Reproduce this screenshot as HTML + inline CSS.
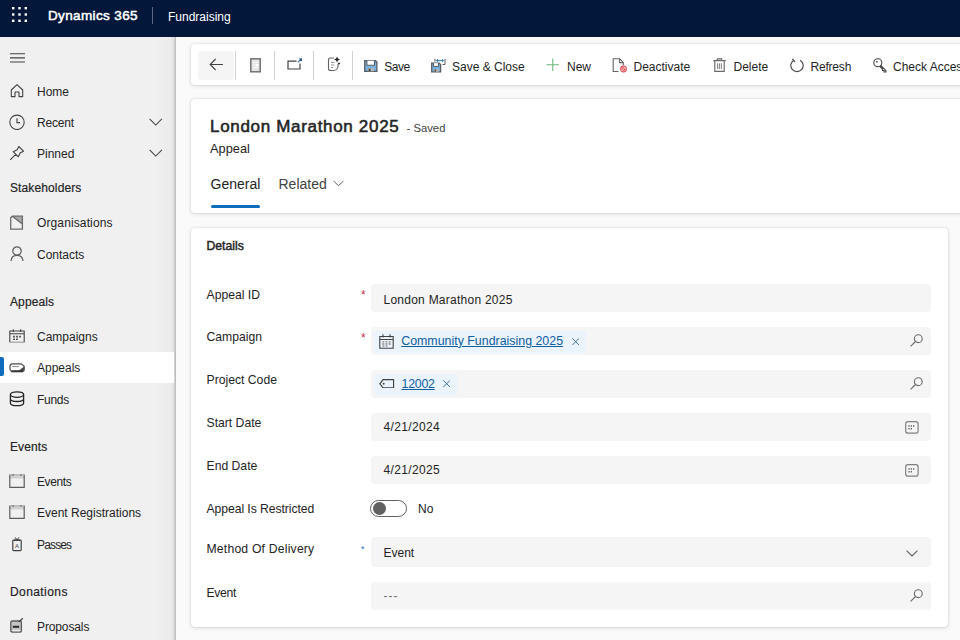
<!DOCTYPE html>
<html><head><meta charset="utf-8"><title>Appeal: London Marathon 2025</title>
<style>
*{box-sizing:border-box;margin:0;padding:0}
html,body{width:960px;height:640px;overflow:hidden;background:#fafafa;font-family:"Liberation Sans",sans-serif;font-size:12px;color:#242424}
.abs{position:absolute}
#top{position:absolute;left:0;top:0;width:960px;height:37px;background:#03173a;color:#fff}
#top .brand{position:absolute;left:48px;top:7px;font-size:13.500px;font-weight:400;-webkit-text-stroke:.5px #fff;line-height:18px;white-space:nowrap;letter-spacing:.37px}
#top .sep{position:absolute;left:152px;top:7px;width:1px;height:17px;background:#5a6886}
#top .app{position:absolute;left:168px;top:9px;font-size:12px;line-height:16px;white-space:nowrap}
#side{position:absolute;left:0;top:37px;width:175.600px;height:603px;background:linear-gradient(90deg,#f0f0f0 0,#f0f0f0 155px,#ebebeb 171px,#dcdcdc 174px,#bdbdbd 175.600px);}
.nav{position:absolute;left:0;width:175px;height:31px}
.nav .t{position:absolute;left:37px;top:9.250px;line-height:15px;white-space:nowrap;color:#242424}
.nav svg{position:absolute;left:9px;top:7px;width:16px;height:16px}
.nav.sel{background:#fff;width:174px}
.nav.sel:before{content:"";position:absolute;left:0;top:5.300px;width:3.900px;height:19.200px;background:#0f6cbd;border-radius:0 2px 2px 0}
.grp{position:absolute;left:10px;line-height:15px;white-space:nowrap;color:#242424;-webkit-text-stroke:.18px #242424;letter-spacing:.12px}
.card{position:absolute;background:#fff;border-radius:4px;box-shadow:0 0 2px rgba(0,0,0,.14),0 1px 4px rgba(0,0,0,.13)}
.cmd{position:absolute;top:0;height:46.500px;line-height:46.500px;white-space:nowrap;color:#242424}
.vsep{position:absolute;top:7px;width:1px;height:29px;background:#d1d1d1}
.lbl{position:absolute;left:16px;margin-top:.6px;font-size:12.200px;line-height:15px;white-space:nowrap;color:#242424}
.fld{position:absolute;left:180px;width:560px;height:28px;background:#f5f5f5;border-radius:4px}
.fld .v{position:absolute;left:13px;top:7px;line-height:15px;white-space:nowrap;color:#242424}
.req{position:absolute;left:170.600px;margin-top:.5px;color:#c4314b;font-size:12px;line-height:12px}
.lnk{color:#115ea3!important;text-decoration:underline;font-size:12.400px}
.sb{font-weight:400;-webkit-text-stroke:.45px #242424}
</style></head><body>
<div id="top">
<svg class="abs" style="left:11.600px;top:7.200px" width="16" height="16" viewBox="0 0 16 16" fill="#fff"><rect x="0" y="0" width="2.400" height="2.400"/><rect x="6.3" y="0" width="2.400" height="2.400"/><rect x="12.6" y="0" width="2.400" height="2.400"/><rect x="0" y="6.3" width="2.400" height="2.400"/><rect x="6.3" y="6.3" width="2.400" height="2.400"/><rect x="12.6" y="6.3" width="2.400" height="2.400"/><rect x="0" y="12.6" width="2.400" height="2.400"/><rect x="6.3" y="12.6" width="2.400" height="2.400"/><rect x="12.6" y="12.6" width="2.400" height="2.400"/></svg>
<div class="brand">Dynamics 365</div><div class="sep"></div><div class="app">Fundraising</div>
</div>
<div id="side">
<!--NAV-->
<svg class="abs" style="left:10px;top:16px" width="16" height="10" viewBox="0 0 16 10" stroke="#424242" stroke-width="1.1" fill="none"><path d="M0 .8h15M0 4.900h15M0 9h15"/></svg>
<div class="nav" style="top:39px"><svg viewBox="0 0 16 16" fill="none" stroke="#424242" stroke-width="1.1" stroke-linejoin="round"><path d="M2.300 7 8 1.600 13.700 7v6.600H10V9H6v4.600H2.300z"/></svg><div class="t">Home</div></div>
<div class="nav" style="top:70px"><svg viewBox="0 0 16 16" fill="none" stroke="#424242" stroke-width="1.1"><circle cx="8" cy="8.300" r="7.200"/><path d="M8 4.300v4.300h3"/></svg><div class="t" style="letter-spacing:-0.2px">Recent</div><svg style="left:149px;top:11px;width:13.500px;height:8.500px" viewBox="0 0 14 9" fill="none" stroke="#424242" stroke-width="1.1"><path d="M.5 1 7 7.5 13.500 1"/></svg></div>
<div class="nav" style="top:101px"><svg viewBox="0 0 16 16" fill="none" stroke="#424242" stroke-width="1.1" stroke-linejoin="round"><path d="M9.800 1.500 14.500 6.200 11.300 7.800 9.300 11.800 4.200 6.700 8.200 4.700zM6.700 9.300 1.200 14.800"/></svg><div class="t">Pinned</div><svg style="left:149px;top:11px;width:13.500px;height:8.500px" viewBox="0 0 14 9" fill="none" stroke="#424242" stroke-width="1.1"><path d="M.5 1 7 7.5 13.500 1"/></svg></div>
<div class="grp" style="top:144.25px">Stakeholders</div>
<div class="nav" style="top:170px"><svg viewBox="0 0 16 16" fill="none" stroke="#6b6b6b" stroke-width="1.300"><path d="M3.300 2.200 13.400 10V2.200z" fill="#a8a8a8" stroke="none"/><path d="M3.300 2.200h10.100v13H1.700V3.800zM3.300 2.200 13.400 10"/></svg><div class="t" style="letter-spacing:0.12px">Organisations</div></div>
<div class="nav" style="top:202px"><svg viewBox="0 0 16 16" fill="none" stroke="#5c5c5c" stroke-width="1.200"><circle cx="8" cy="5" r="4.200"/><path d="M2 15c.3-3.900 2.600-5.700 6-5.700s5.700 1.800 6 5.700"/></svg><div class="t">Contacts</div></div>
<div class="grp" style="top:258.25px">Appeals</div>
<div class="nav" style="top:284px"><svg viewBox="0 0 16 16" fill="none" stroke="#424242" stroke-width="1.1"><path d="M.8 14.200V3h14.400v11.200M.8 5.800h14.400M4.300 1.300V4M11.700 1.300V4"/><path d="M.8 14.200h14.400" stroke="#9a9a9a"/><path d="M4 8.600h2M7 8.600h2M10 8.600h2M4 11.300h2M7 11.300h2" stroke="#5c5c5c" stroke-width="1.600"/></svg><div class="t">Campaigns</div></div>
<div class="nav sel" style="top:315px"><svg viewBox="0 0 16 16" fill="none" stroke="#4a4a4a" stroke-width="1.200"><path d="M3.500 4.800h8.700l3 2.400v3.600a1.600 1.600 0 0 1-1.600 1.600H3.500A2.500 2.500 0 0 1 1 9.900V7.300a2.500 2.500 0 0 1 2.500-2.500z" fill="#fff"/><path d="M9 12.200 15 7.600v3.200a1.500 1.500 0 0 1-1.500 1.500z" fill="#4a4a4a" stroke="none"/><path d="M2.400 12.300h11.600" stroke="#333" stroke-width="2"/><path d="M3.400 7.600h6.600" stroke="#8a8a8a" stroke-width="1"/></svg><div class="t">Appeals</div></div>
<div class="nav" style="top:347px"><svg viewBox="0 0 16 16" fill="none" stroke="#242424" stroke-width="1.300"><ellipse cx="8" cy="3.600" rx="6.600" ry="2.700"/><path d="M1.400 3.600v8.300c0 1.500 3 2.700 6.600 2.700s6.600-1.200 6.600-2.700V3.600M1.400 7.800c0 1.500 3 2.700 6.600 2.700s6.600-1.200 6.600-2.700"/></svg><div class="t" style="letter-spacing:-0.3px">Funds</div></div>
<div class="grp" style="top:403.25px">Events</div>
<div class="nav" style="top:429px"><svg viewBox="0 0 16 16" fill="none" stroke="#5c5c5c" stroke-width="1.200"><path d="M.8 1.800h14.400v3.600H.8z" fill="#d0d0d0" stroke="none"/><path d="M.8 1.600v12.700h14.400V1.600"/><path d="M.8 1.800h14.400" stroke="#b0b0b0"/><path d="M4 1.200v1.600M12 1.200v1.600" stroke="#5c5c5c"/></svg><div class="t" style="letter-spacing:-.4px">Events</div></div>
<div class="nav" style="top:460px"><svg viewBox="0 0 16 16" fill="none" stroke="#5c5c5c" stroke-width="1.200"><path d="M.8 1.800h14.400v3.600H.8z" fill="#d0d0d0" stroke="none"/><path d="M.8 1.600v12.700h14.400V1.600"/><path d="M.8 1.800h14.400" stroke="#b0b0b0"/><path d="M4 1.200v1.600M12 1.200v1.600" stroke="#5c5c5c"/></svg><div class="t">Event Registrations</div></div>
<div class="nav" style="top:492px"><svg viewBox="0 0 16 16" fill="none" stroke="#424242" stroke-width="1"><rect x="3.800" y="4.200" width="8.400" height="10.400" rx=".8" stroke-width="1.200"/><path d="M6 1.300 8 4 10 1.300"/><path d="M5 4.200h6" stroke-width="1.400"/><text x="8" y="11.500" font-size="6" font-family="Liberation Sans, sans-serif" text-anchor="middle" fill="#424242" stroke="none">A</text></svg><div class="t" style="letter-spacing:-0.85px">Passes</div></div>
<div class="grp" style="top:548.25px;letter-spacing:.42px">Donations</div>
<div class="nav" style="top:574px"><svg viewBox="0 0 16 16" fill="none" stroke="#242424" stroke-width="1.300"><rect x="1.800" y="3" width="10.600" height="11" rx="1.200" fill="#c4c4c4" stroke="#5c5c5c" stroke-width="1.300"/><path d="M3.800 8.800h6.400" stroke="#2b2b2b" stroke-width="2"/><path d="M3.500 12.600h7.500" stroke="#ededed" stroke-width="1.600"/><path d="M10 3.800 13.800.2" stroke="#424242" stroke-width="1.200"/></svg><div class="t" style="letter-spacing:-0.12px">Proposals</div></div>
</div>
<div id="main">
<!--MAIN-->
<!-- command bar -->
<div class="card" style="left:190.500px;top:44px;width:800px;height:41.200px">
<div class="abs" style="left:7px;top:7px;width:36.500px;height:29px;background:#f5f5f5;border-radius:4px"></div>
<svg class="abs" style="left:18px;top:14px" width="15" height="13" viewBox="0 0 15 13" fill="none" stroke="#424242" stroke-width="1.100"><path d="M14 6.500H1.200M6.600 1 1.200 6.500l5.400 5.500"/></svg>
<div class="vsep" style="left:44.6px"></div>
<svg class="abs" style="left:59px;top:14px" width="11" height="15" viewBox="0 0 11 15" fill="none" stroke="#6b6b6b" stroke-width="1.400"><rect x=".8" y=".8" width="9.400" height="13" fill="#e4e4e4"/><path d="M3 4.500h5M3 7h3M3 9.500h5" stroke="#f8f8f8" stroke-width="1.100"/><rect x="5.800" y="6" width="2.600" height="2.600" fill="#fff" stroke="none"/></svg>
<div class="vsep" style="left:83.4px"></div>
<svg class="abs" style="left:96px;top:14px" width="16" height="13" viewBox="0 0 16 13" fill="none" stroke="#424242" stroke-width="1.200"><path d="M9.500 3.200H1v7.800h12V5.500"/><path d="M10.800 4.300 14.200 1M12.300.8h2.100v2.100" stroke="#2f5d94" stroke-width="1.100"/></svg>
<div class="vsep" style="left:122.3px"></div>
<svg class="abs" style="left:136px;top:12.300px" width="14" height="16" viewBox="0 0 14 16" fill="none" stroke="#616161" stroke-width="1.100"><path d="M7 2H3.500C2.400 2 1.500 2.900 1.500 4v8.500c0 1.100.9 2 2 2h3c2.500 0 4.500-2 4.500-4.500V8"/><path d="M4 6.500h3.500M4 9h3.500M4 11.500h2" stroke="#8a8a8a" stroke-width=".9"/><path d="M10 .5l.9 2.100 2.100.9-2.100.9-.9 2.100-.9-2.100L7 3.500l2.100-.9z" fill="#242424" stroke="none"/><path d="M12 6l.5 1 1 .5-1 .5-.5 1-.5-1-1-.5 1-.5z" fill="#242424" stroke="none"/></svg>
<div class="vsep" style="left:161.3px"></div>
<!-- Save -->
<svg class="abs" style="left:173.900px;top:15.500px" width="13.600" height="12" viewBox="0 0 13.600 12" fill="none"><path d="M.7.700h10.800l1.400 1.400v9.200H.7z" fill="#78b0e0" stroke="#585d64" stroke-width="1.300"/><path d="M2.900.7v4.600h7.600V.7" fill="#fff" stroke="#585d64" stroke-width="1.100"/><rect x="3.800" y="8" width="6" height="3.300" fill="#b8b8b8"/><rect x="4.600" y="8.600" width="2" height="2.700" fill="#454545"/></svg>
<div class="cmd" style="left:193.700px;letter-spacing:-.45px">Save</div>
<!-- Save & Close -->
<svg class="abs" style="left:240.300px;top:13.500px" width="15" height="15" viewBox="0 0 15 15" fill="none"><path d="M.7 5.200h7.600l1.300 1.300v7.300H.7z" fill="#78b0e0" stroke="#585d64" stroke-width="1.300"/><path d="M2.500 5.200v3.200h5V5.200" fill="#fff" stroke="#585d64" stroke-width="1"/><rect x="3" y="11" width="4.600" height="2.800" fill="#b8b8b8"/><rect x="3.600" y="11.400" width="1.500" height="2.400" fill="#454545"/><path d="M5.500 2.600h7M7 1.200 5.500 2.600 7 4M11 1.200l1.500 1.400L11 4" stroke="#2f7fd0" stroke-width="1"/><path d="M4 .8v3M14 .8v5.700h-2.500" stroke="#585d64" stroke-width="1"/></svg>
<div class="cmd" style="left:261.500px">Save &amp; Close</div>
<!-- New -->
<svg class="abs" style="left:355.300px;top:14.400px" width="13.500" height="13.500" viewBox="0 0 14 14" fill="none" stroke="#6bb77b" stroke-width="1.100"><path d="M7 .5v13M.5 7h13"/></svg>
<div class="cmd" style="left:376.500px">New</div>
<!-- Deactivate -->
<svg class="abs" style="left:421.500px;top:14px" width="16" height="15" viewBox="0 0 16 15" fill="none" stroke="#616161" stroke-width="1.100"><path d="M6.500 13.500H1.200V.8h6.500l3.600 3.600v2.800M7.500.8v3.800h3.800"/><circle cx="11.500" cy="11" r="3.400" stroke="none" fill="#e5484f"/><path d="M9.700 12.800 13.300 9.200" stroke="#fff" stroke-width="1"/><circle cx="11.500" cy="11" r="2.100" stroke="#fbdcdc" stroke-width=".6" fill="none"/></svg>
<div class="cmd" style="left:443px">Deactivate</div>
<!-- Delete -->
<svg class="abs" style="left:522px;top:14.300px" width="13" height="14" viewBox="0 0 13 14" fill="none" stroke="#6b6b6b" stroke-width="1.150"><path d="M.3 2.600h12.400M4.300 2.600V.8h4.400v1.800M1.800 2.600v10.800h9.400V2.600"/><path d="M4.600 5.200v5.800M6.500 5.200v5.800M8.400 5.200v5.800" stroke="#8a8a8a" stroke-width="1.100"/></svg>
<div class="cmd" style="left:543px">Delete</div>
<!-- Refresh -->
<svg class="abs" style="left:599.400px;top:13.800px" width="14" height="15" viewBox="0 0 14 15" fill="none" stroke="#4a4a4a" stroke-width="1.150"><path d="M10.100 2.130A6.200 6.200 0 1 1 3.900 2.130"/><path d="M2.300 1 5.200 3.900"/></svg>
<div class="cmd" style="left:620px;letter-spacing:-.2px">Refresh</div>
<!-- Check Access -->
<svg class="abs" style="left:682px;top:13.700px" width="14" height="15" viewBox="0 0 14 15" fill="none" stroke="#424242" stroke-width="1.100"><circle cx="4.800" cy="4.800" r="4"/><circle cx="3.800" cy="3.800" r=".9" fill="#424242" stroke="none"/><path d="M7.800 7.500 13 12.700V14h-2v-1.500H9.500V11L7 8.500"/></svg>
<div class="cmd" style="left:702.500px">Check Access</div>
</div>

<!-- header -->
<div class="card" style="left:190.500px;top:99px;width:800px;height:113.500px">
<div class="abs" style="left:19.500px;top:15.500px;font-size:17px;font-weight:400;-webkit-text-stroke:.55px #242424;line-height:24px;white-space:nowrap;color:#242424;letter-spacing:.68px">London Marathon 2025</div>
<div class="abs" style="left:216px;top:21.300px;font-size:11.300px;line-height:16px;white-space:nowrap;color:#424242">- Saved</div>
<div class="abs" style="left:19.500px;top:42px;font-size:12.800px;line-height:16px;white-space:nowrap;color:#242424">Appeal</div>
<div class="abs" style="left:20px;top:75.500px;font-size:14px;line-height:18px;white-space:nowrap;color:#242424">General</div>
<div class="abs" style="left:88px;top:75.500px;font-size:14px;line-height:18px;white-space:nowrap;color:#424242">Related</div>
<svg class="abs" style="left:142px;top:81px" width="11" height="7" viewBox="0 0 11 7" fill="none" stroke="#616161" stroke-width="1"><path d="M.5.800 5.500 5.800 10.500.8"/></svg>
<div class="abs" style="left:20px;top:105.500px;width:49.500px;height:3px;border-radius:2px;background:#0f6cbd"></div>
</div>

<!-- details -->
<div class="card" style="left:190.500px;top:227.500px;width:757.700px;height:399.500px">
<div class="lbl sb" style="top:10.500px">Details</div>
<div class="lbl" style="top:59.5px">Appeal ID</div><div class="req" style="top:60.500px">*</div>
<div class="fld" style="top:56.6px;height:27.7px"><div class="v" style="top:8.5px;letter-spacing:.25px">London Marathon 2025</div></div>
<div class="lbl" style="top:102.3px">Campaign</div><div class="req" style="top:103.500px">*</div>
<div class="fld" style="top:99.5px;height:27.6px"><div class="abs" style="left:3.500px;top:4.0px;width:211.500px;height:21.500px;background:#ebf3fc;border-radius:4px"></div><svg class="abs" style="left:8.800px;top:6.7px" width="15" height="15" viewBox="0 0 15 15" fill="none" stroke="#424242" stroke-width="1.100"><path d="M.8 2.500h13.400v11.700H.8zM.8 5.500h13.400M4 .3v3.200M11 .3v3.200"/><path d="M3.300 7.800h2M6.500 7.800h2M9.700 7.800h2M3.300 10h2M6.500 10h2M9.700 10h2M3.300 12.200h2M6.500 12.200h2" stroke="#8a8a8a" stroke-width="1.300"/></svg><div class="v lnk" style="left:30.700px;top:6.8px">Community Fundraising 2025</div><svg class="abs" style="left:201.0px;top:10.6px" width="7.400" height="7.400" viewBox="0 0 8 8" stroke="#3a6ea0" stroke-width="1.050"><path d="M.4.400l7.200 7.200M7.600.4.400 7.600"/></svg><svg class="abs" style="left:539.9px;top:7.2px" width="13" height="13" viewBox="0 0 13 13" fill="none" stroke="#6b6b6b" stroke-width="1.100"><circle cx="8.300" cy="4.700" r="3.900"/><path d="M5.500 7.500.6 12.400"/></svg></div>
<div class="lbl" style="top:145.2px">Project Code</div>
<div class="fld" style="top:142.100px;height:28.300px"><div class="abs" style="left:3.500px;top:4.6px;width:83px;height:21px;background:#ebf3fc;border-radius:4px"></div><svg class="abs" style="left:8.500px;top:9.1px" width="15.500" height="9.600" viewBox="0 0 16 10" fill="none" stroke="#424242" stroke-width="1.200"><path d="M4.200.7h10.900v8.600H4.200L.8 5z"/><circle cx="4.800" cy="5" r="1" fill="#424242" stroke="none"/></svg><div class="v lnk" style="left:31px;top:7.1px;letter-spacing:-.25px">12002</div><svg class="abs" style="left:72.3px;top:10.6px" width="7.400" height="7.400" viewBox="0 0 8 8" stroke="#3a6ea0" stroke-width="1.050"><path d="M.4.400l7.200 7.200M7.600.4.400 7.600"/></svg><svg class="abs" style="left:539.9px;top:7.5px" width="13" height="13" viewBox="0 0 13 13" fill="none" stroke="#6b6b6b" stroke-width="1.100"><circle cx="8.300" cy="4.700" r="3.900"/><path d="M5.500 7.500.6 12.400"/></svg></div>
<div class="lbl" style="top:188.2px">Start Date</div>
<div class="fld" style="top:185.1px;height:28.0px"><div class="v" style="top:7.2px;letter-spacing:.35px">4/21/2024</div><svg class="abs" style="left:534.5px;top:8.0px" width="14" height="13" viewBox="0 0 14 13" fill="none" stroke="#808080" stroke-width="1.200"><rect x=".7" y=".7" width="12.400" height="11.400" rx="2.200"/><path d="M3.400 4.900h1.300M5.700 4.900h1.300M8 4.900h1.300M3.400 7.800h1.300M5.700 7.800h1.300" stroke="#616161" stroke-width="1.500"/></svg></div>
<div class="lbl" style="top:231.2px">End Date</div>
<div class="fld" style="top:228.1px;height:28.0px"><div class="v" style="top:7.2px;letter-spacing:.35px">4/21/2025</div><svg class="abs" style="left:534.5px;top:8.0px" width="14" height="13" viewBox="0 0 14 13" fill="none" stroke="#808080" stroke-width="1.200"><rect x=".7" y=".7" width="12.400" height="11.400" rx="2.200"/><path d="M3.400 4.900h1.300M5.700 4.900h1.300M8 4.900h1.300M3.400 7.800h1.300M5.700 7.800h1.300" stroke="#616161" stroke-width="1.500"/></svg></div>
<div class="lbl" style="top:274.0px;letter-spacing:-.07px">Appeal Is Restricted</div>
<div class="abs" style="left:179.5px;top:272.5px;width:36.500px;height:17.400px;border:1.400px solid #616161;border-radius:9px;background:#fff"><div class="abs" style="left:1.600px;top:.8px;width:13px;height:13px;border-radius:7px;background:#616161"></div></div>
<div class="abs" style="left:227.5px;top:274.2px;line-height:15px">No</div>
<div class="lbl" style="top:314.0px;letter-spacing:.2px">Method Of Delivery</div><div class="req" style="top:315.0px;color:#0f6cbd;font-size:8.500px">*</div>
<div class="fld" style="top:309.8px;height:29.3px"><div class="v" style="top:9.2px">Event</div><svg class="abs" style="left:535.3px;top:13.2px" width="12" height="7" viewBox="0 0 12 7" fill="none" stroke="#616161" stroke-width="1.100"><path d="M.5.600 6 6 11.500.6"/></svg></div>
<div class="lbl" style="top:357.7px;letter-spacing:-.3px">Event</div>
<div class="fld" style="top:354.3px;height:28.200px"><div class="v" style="top:7.1px;color:#707070;letter-spacing:1px">---</div><svg class="abs" style="left:539.9px;top:7.5px" width="13" height="13" viewBox="0 0 13 13" fill="none" stroke="#6b6b6b" stroke-width="1.100"><circle cx="8.300" cy="4.700" r="3.900"/><path d="M5.500 7.500.6 12.400"/></svg></div>
</div>
</div>
</body></html>
